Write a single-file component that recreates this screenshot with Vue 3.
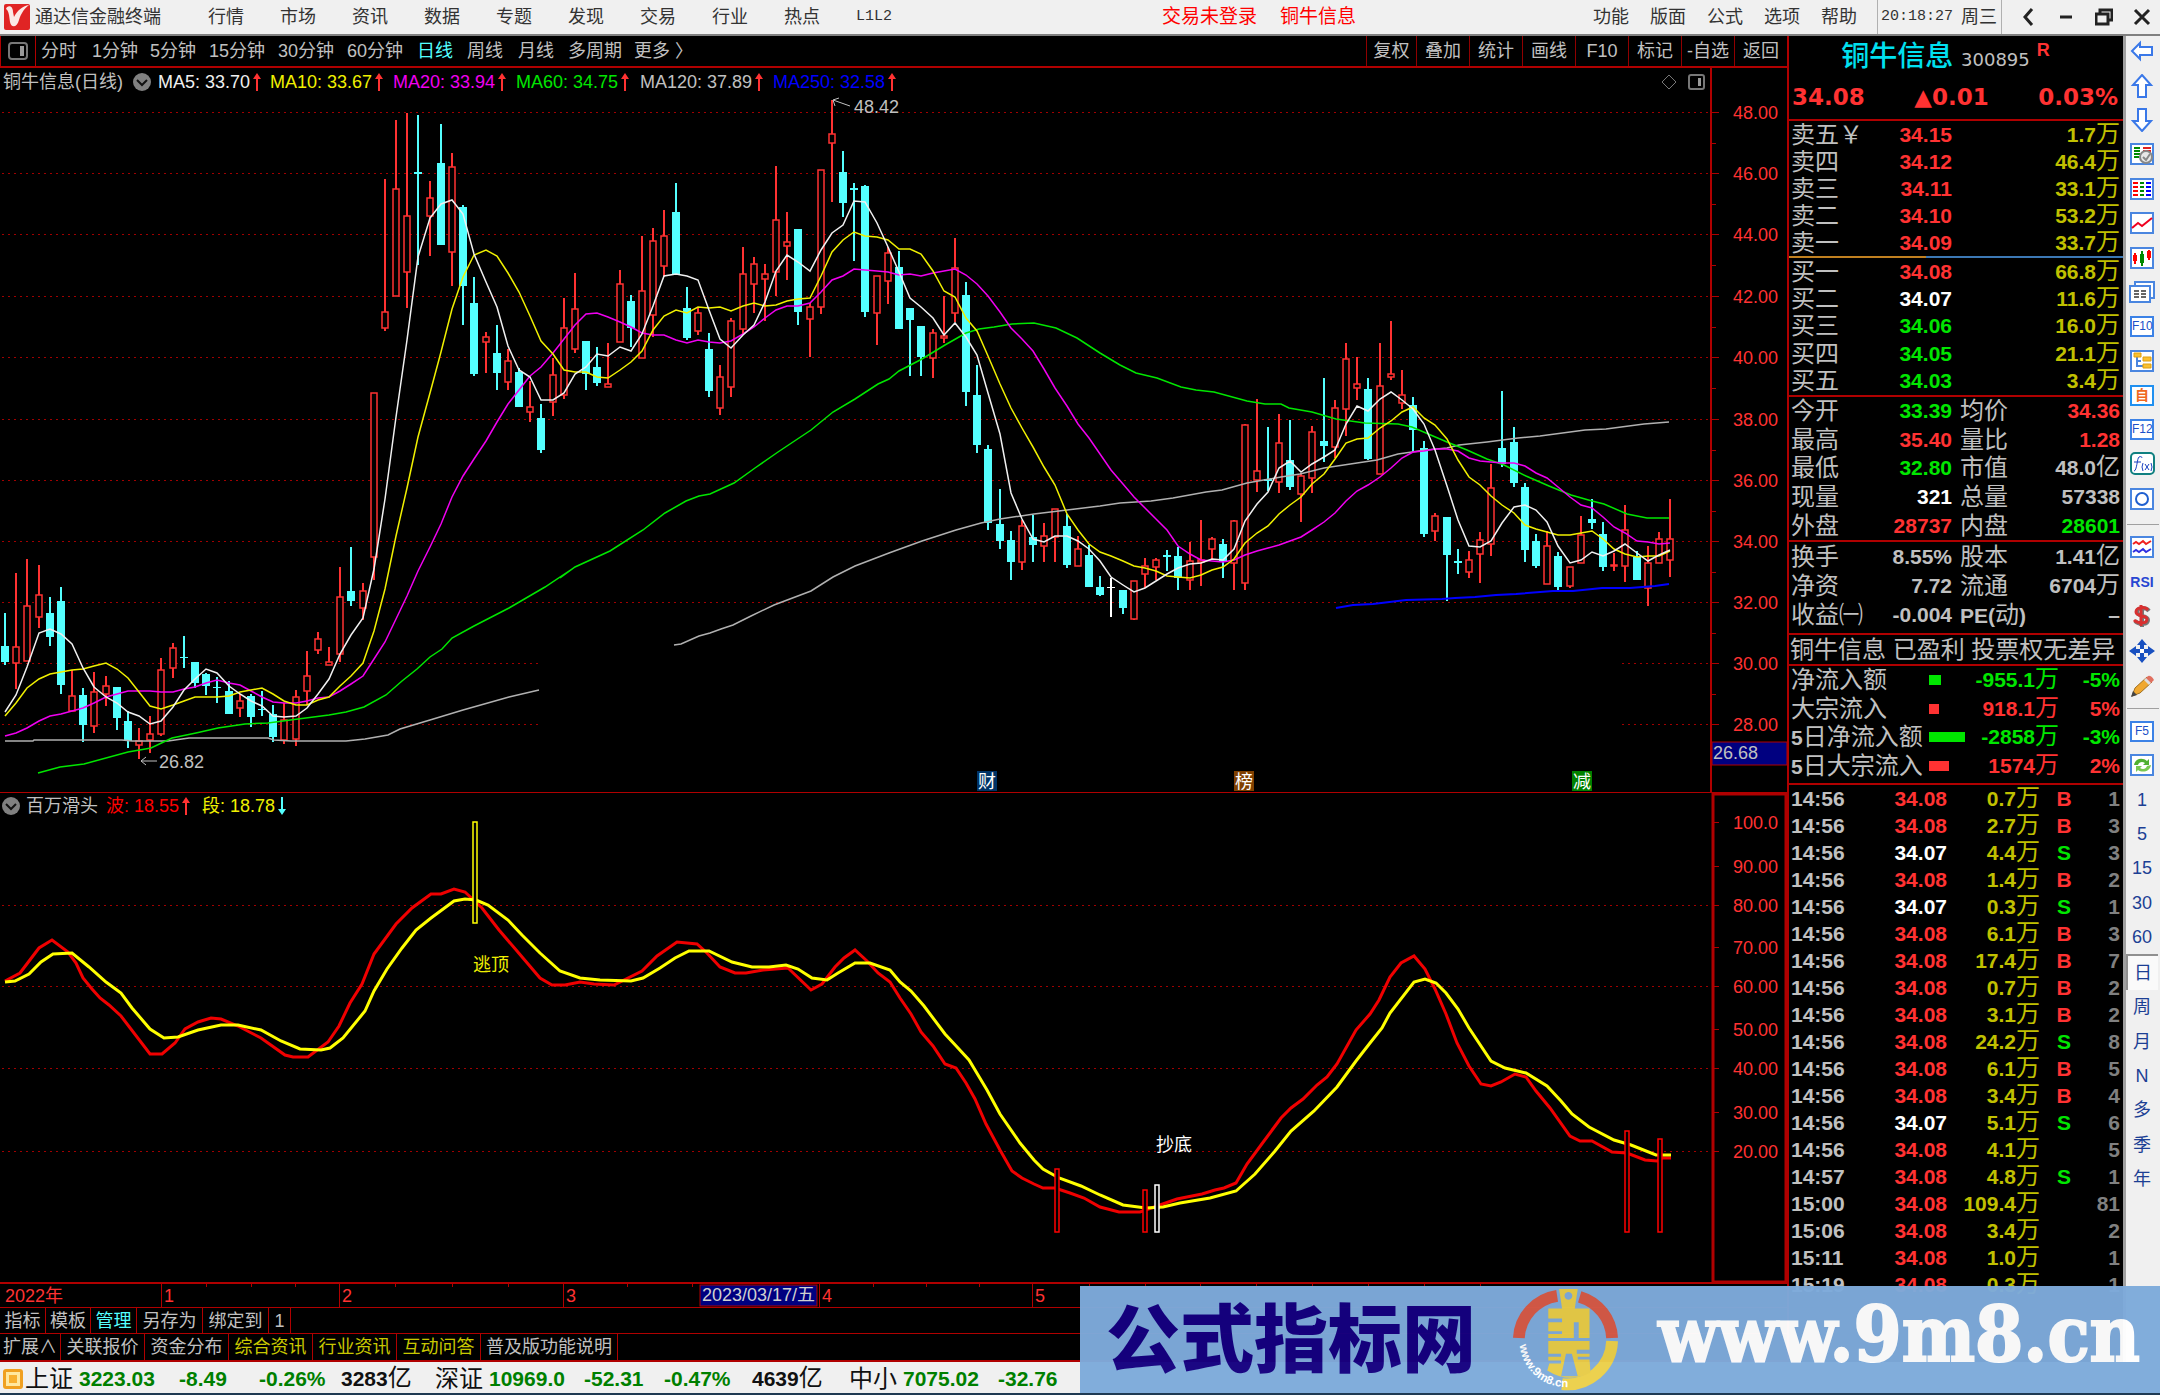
<script setup>
const menus = ['行情', '市场', '资讯', '数据', '专题', '发现', '交易', '行业', '热点', 'L1L2']
const menusRight = ['功能', '版面', '公式', '选项', '帮助']
const periods = ['分时', '1分钟', '5分钟', '15分钟', '30分钟', '60分钟', '日线', '周线', '月线', '多周期', '更多 〉']
const tools = ['复权', '叠加', '统计', '画线', 'F10', '标记', '-自选', '返回']
const averages = [
  ['MA5: 33.70', '#f0f0f0'], ['MA10: 33.67', '#f0f000'], ['MA20: 33.94', '#f000f0'],
  ['MA60: 34.75', '#00e600'], ['MA120: 37.89', '#c0c0c0'], ['MA250: 32.58', '#0000ff']
]

const sells = [['卖五', '34.15', '1.7'], ['卖四', '34.12', '46.4'], ['卖三', '34.11', '33.1'], ['卖二', '34.10', '53.2'], ['卖一', '34.09', '33.7']]
const buys = [['买一', '34.08', '66.8', 'r'], ['买二', '34.07', '11.6', 'w'], ['买三', '34.06', '16.0', 'g'], ['买四', '34.05', '21.1', 'g'], ['买五', '34.03', '3.4', 'g']]
const facts = [
  ['今开', '33.39', 'g', '均价', '34.36', '', 'r'],
  ['最高', '35.40', 'r', '量比', '1.28', '', 'r'],
  ['最低', '32.80', 'g', '市值', '48.0', '亿', 's'],
  ['现量', '321', 'w', '总量', '57338', '', 's'],
  ['外盘', '28737', 'r', '内盘', '28601', '', 'g']
]
const ratios = [
  ['换手', '8.55%', 's', '股本', '1.41', '亿', 's'],
  ['净资', '7.72', 's', '流通', '6704', '万', 's'],
  ['收益㈠', '-0.004', 's', 'PE(动)', '–', '', 's']
]
const flows = [
  ['', '净流入额', 12, '-955.1', '-5%', 'g'],
  ['', '大宗流入', 10, '918.1', '5%', 'r'],
  ['5', '日净流入额', 36, '-2858', '-3%', 'g'],
  ['5', '日大宗流入', 20, '1574', '2%', 'r']
]
const ticks = [
  ['14:56', '34.08', '0.7', 'B', 1], ['14:56', '34.08', '2.7', 'B', 3], ['14:56', '34.07', '4.4', 'S', 3],
  ['14:56', '34.08', '1.4', 'B', 2], ['14:56', '34.07', '0.3', 'S', 1], ['14:56', '34.08', '6.1', 'B', 3],
  ['14:56', '34.08', '17.4', 'B', 7], ['14:56', '34.08', '0.7', 'B', 2], ['14:56', '34.08', '3.1', 'B', 2],
  ['14:56', '34.08', '24.2', 'S', 8], ['14:56', '34.08', '6.1', 'B', 5], ['14:56', '34.08', '3.4', 'B', 4],
  ['14:56', '34.07', '5.1', 'S', 6], ['14:56', '34.08', '4.1', '', 5], ['14:57', '34.08', '4.8', 'S', 1],
  ['15:00', '34.08', '109.4', '', 81], ['15:06', '34.08', '3.4', '', 2], ['15:11', '34.08', '1.0', '', 1],
  ['15:19', '34.08', '0.3', '', 1]
]

/* Candles: kind (r = up, c = down, w = flat), high, body top, body bottom, low */
const early = `c 1170 1244 1280 1286,r 1080 1245 1282 1340,r 1049 1154 1276 1276,r 1062 1128 1178 1203,c 1133 1170 1223 1243,
c 1112 1143 1330 1351,r 1297 1355 1389 1389,c 1338 1352 1420 1458,r 1301 1346 1423 1438,r 1311 1333 1350 1378,
c 1335 1335 1404 1431,c 1388 1412 1456 1472,r 1427 1457 1464 1497,r 1399 1440 1453 1484,r 1269 1298 1441 1444,
r 1237 1248 1293 1314,c 1220 1267 1270 1293,c 1280 1280 1326 1337,c 1304 1307 1333 1353,c 1312 1334 1337 1370,
c 1322 1345 1395 1395,r 1350 1366 1383 1403,c 1350 1355 1403 1425,c 1345 1384 1387 1400,c 1375 1395 1448 1458,
r 1370 1410 1454 1462,r 1342 1358 1451 1467,r 1254 1311 1343 1376,r 1211 1228 1252 1260,r 1245 1278 1285 1285,
r 1066 1134 1262 1279,c 1022 1119 1142 1153,r 1103 1121 1158 1184,r 677 677 1044 1096,r 198 495 530 538,
r 65 220 459 459,r 50 280 405 486,c 54 181 187 390,r 202 240 280 370,c 74 161 346 346,
r 138 170 361 436,c 256 259 437 524,c 417 474 634 638,r 539 550 563 631,c 525 586 631 669,
r 578 604 651 669,c 620 629 708 708,r 650 708 720 742,c 702 732 805 810,r 598 636 697 729,
r 464 530 681 691,r 407 489 577 587,c 561 561 634 669,c 574 618 654 661,r 565 656 664 664,
r 400 432 562 562,c 458 471 530 573,r 324 448 597 597,r 307 337 502 551,r 266 324 391 417,
c 205 272 410 410,c 440 485 553 558,r 483 498 537 546,c 541 578 671 685,r 613 640 710 725,
r 508 516 664 685,r 349 411 533 546,r 371 388 433 497,r 388 409 420 516,r 168 288 405 460,
r 272 338 347 423,c 309 309 496 524,r 475 483 510 595,r 176 177 483 500,r 20 96 116 248,
c 135 182 251 282,c 205 218 221 380,c 211 212 496 507,r 415 415 498 568,r 350 362 425 476,
c 359 395 533 533,c 485 487 513 638,c 527 527 595 638,r 532 542 597 642,r 460 548 553 565,
r 330 397 498 518,c 427 458 674 706,c 613 680 793 812,c 794 801 967 984,c 891 971 1008 1025,
c 985 1006 1054 1095,r 962 975 1056 1072,c 950 998 1017 1055,r 968 996 1020 1055,r 936 936 998 1055,
c 947 975 1061 1068,r 996 1027 1063 1063,c 1017 1039 1111 1111,c 1086 1110 1129 1132,w 1090 1110 1112 1179,
c 1117 1117 1158 1172,r 1097 1098 1182 1186,r 1045 1063 1083 1113,r 1045 1050 1067 1095`
const late = `c 807 822 828 870,c 798 826 890 928,r 783 841 896 928,r 717 838 842 915,r 767 773 805 837,
c 775 790 843 892,r 718 719 847 928,r 430 431 905 928,r 353 571 598 632,c 438 595 599 631,
r 398 485 604 636,c 416 538 618 627,r 575 584 640 722,r 434 454 590 636,c 290 479 496 542,
r 358 382 499 530,r 187 233 383 465,r 228 310 320 356,c 290 325 533 538,r 187 314 580 580,
r 119 278 289 298,r 267 343 365 384,c 348 371 446 513,c 479 502 758 767,r 696 706 751 781,
c 709 709 821 960,c 803 840 846 879,r 809 836 874 892,r 754 778 818 906,r 550 620 788 825,
c 331 502 550 559,c 438 484 605 618,c 605 619 807 843,c 758 781 856 862,r 750 796 909 909,
c 812 826 919 930,r 858 859 914 922,r 704 763 847 847,c 655 713 726 745,c 723 758 857 869,
r 815 853 856 870,r 672 746 855 902,c 809 828 898 898,r 794 847 922 974,r 753 773 847 847,r 655 773 837 888`

const rows = (text, top, scale) => text.split(',').map(row => {
  const [kind, ...ys] = row.trim().split(' ')
  return [kind, ...ys.map(y => Math.round(top + y / scale))]
})
const candles = [...rows(early, 90, 2.24), ...rows(late, 280, 3)].map(([kind, high, top, bottom, low], i) => ({
  kind, high, top, bottom: Math.max(bottom, top + 1), low, x: Math.round(5 + 11.175 * i)
}))
const inks = { r: '#ff3232', c: '#54ffff', w: '#ffffff' }

/* Moving averages run over the closes; the seeds cover the days before the first candle */
const closes = candles.map(c => (c.kind === 'r' ? c.top : c.bottom))
const average = (n, seeds) => closes.map((_, i) => {
  const y = i < n - 1 ? 90 + seeds[i] / 2.24 : closes.slice(i - n + 1, i + 1).reduce((a, b) => a + b) / n
  return `${candles[i].x},${Math.round(y)}`
}).join(' ')
const ma5 = average(5, [1390, 1352, 1290, 1213])
const ma10 = average(10, [1400, 1370, 1337, 1317, 1306, 1302, 1297, 1294, 1287])
const ma20 = average(20, [1444, 1437, 1426, 1411, 1400, 1395, 1389, 1383, 1370, 1358, 1350, 1344, 1343, 1343, 1346, 1346, 1340, 1335, 1326])

const trace = (left, top, sx, sy, text) => text.split(' ').map(p => {
  const [x, y] = p.split(',')
  return `${Math.round(left + x / sx)},${Math.round(top + y / sy)}`
}).join(' ')
const a = t => trace(0, 90, 2.6133, 2.24, t)
const b = t => trace(560, 90, 2.6133, 2.24, t)
const c = t => trace(1120, 280, 2.45, 3, t)
const d = t => trace(0, 780, 1.742, 3, t)
const e = t => trace(840, 880, 1.782, 3, t)

const ma60 = [
  a('100,1527 158,1514 220,1507 335,1481 395,1471 450,1450 512,1437 570,1427 640,1419 700,1416 780,1406 860,1397 905,1390 950,1379 1010,1352 1050,1322 1090,1295 1123,1267 1154,1250 1182,1225 1240,1198 1330,1158 1425,1112 1503,1067'),
  b('0,1090 40,1066 130,1030 216,984 275,945 330,918 362,908 393,902 455,877 510,844 570,808 655,760 714,720 772,689 830,656 860,644 886,628 945,600 1005,568 1060,543 1095,533 1135,528 1180,522 1240,520 1295,531 1350,553 1410,587 1450,606'),
  c('0,252 40,276 90,291 150,317 185,326 230,333 310,359 355,368 395,369 415,381 470,393 530,414 600,427 680,428 715,437 800,484 850,508 900,534 940,552 995,585 1050,615 1105,642 1157,659 1185,670 1242,700 1290,710 1346,710')
].join(' ')
const ma120a = a('13,1457 85,1457 90,1454 320,1454 345,1457 440,1455 495,1450 700,1450 715,1454 760,1457 905,1457 955,1452 1015,1442 1045,1430 1123,1408 1210,1386 1330,1358 1408,1342')
const ma120b = [
  b('298,1241 315,1238 362,1221 393,1215 420,1205 451,1197 500,1175 560,1152 655,1120 714,1089 772,1063 860,1034 945,1009 1035,984 1100,967 1150,959 1240,948 1325,939 1410,930'),
  c('0,665 75,660 130,651 210,632 250,626 310,607 395,589 440,580 500,562 580,545 630,537 680,520 750,507 800,500 830,493 900,483 975,470 1030,466 1140,447 1190,443 1285,428 1346,422')
].join(' ')
const ma250 = c('528,981 570,973 620,970 700,956 790,954 820,950 870,948 920,941 970,939 1060,931 1110,930 1180,922 1250,921 1310,915 1346,908')

const wave = [
  d('8,601 35,577 68,500 90,476 118,513 132,545 145,590 160,625 175,650 190,671 210,705 262,820 283,820 305,785 322,745 345,723 368,711 385,714 415,735 455,770 497,823 510,829 537,829 572,783 590,735 610,667 630,610 652,520 690,430 718,380 750,340 768,338 790,323 810,332 840,380 870,448 900,510 940,590 962,613 985,611 1010,604 1035,609 1070,613 1118,571 1145,525 1180,482 1215,488 1230,512 1255,558 1280,577 1300,576 1330,567 1372,560 1413,628 1432,608 1455,558 1470,532 1490,507 1510,540 1530,577 1550,604 1568,650'),
  e('127,400 145,453 165,495 187,550 207,562 225,605 240,655 260,730 285,808 307,870 325,892 345,908 362,920 383,921 410,937 435,950 463,977 497,992 535,992 565,975 600,953 645,940 668,926 685,922 706,905 725,850 755,780 785,712 803,681 825,655 850,612 868,588 886,550 920,448 945,400 960,357 980,288 1000,247 1022,224 1042,265 1060,325 1080,400 1100,485 1120,555 1143,608 1160,615 1178,604 1202,580 1222,589 1240,630 1265,680 1300,765 1318,780 1340,781 1375,812 1402,816 1435,838 1456,840 1465,830 1480,830')
].join(' ')
const swing = [
  d('8,604 27,601 50,578 72,543 92,520 125,517 155,557 185,603 210,635 230,680 262,745 285,770 310,768 345,748 385,731 415,731 455,748 490,780 523,805 560,808 575,800 597,770 635,690 652,630 675,565 700,500 725,448 750,410 790,360 810,355 830,358 850,371 885,418 910,463 940,515 975,570 1010,590 1045,598 1100,600 1120,590 1150,560 1175,532 1200,510 1235,509 1275,543 1310,559 1340,559 1370,553 1390,563 1415,592 1440,596 1460,577 1490,547 1515,545 1550,568'),
  e('107,302 127,330 150,375 187,460 210,500 230,537 262,628 285,698 320,785 345,838 362,863 390,890 430,915 463,942 505,972 545,980 575,978 605,967 660,950 705,929 740,878 775,810 803,750 845,690 886,618 920,540 945,485 965,440 980,395 1022,302 1042,293 1062,305 1080,335 1102,385 1120,442 1160,540 1185,560 1222,577 1260,616 1285,660 1305,700 1335,738 1380,778 1410,792 1455,822 1480,822')
].join(' ')

const prices = [[48, 111], [46, 172], [44, 233], [42, 295], [40, 356], [38, 418], [36, 479], [34, 540], [32, 601], [30, 662], [28, 723]]
const levels = [['100.0', 821], ['90.00', 865], ['80.00', 904], ['70.00', 946], ['60.00', 985], ['50.00', 1028], ['40.00', 1067], ['30.00', 1111], ['20.00', 1150]]
const signals = [[475, 821, 922, '#ffff00'], [1057, 1168, 1231, '#ff0000'], [1145, 1189, 1231, '#ff0000'], [1157, 1184, 1231, '#ffffff'], [1627, 1130, 1231, '#ff0000'], [1660, 1138, 1231, '#ff0000']]
const tags = [['财', 977, '#003366'], ['榜', 1234, '#804000'], ['减', 1572, '#008000']]
const months = [[161, '1'], [339, '2'], [563, '3'], [819, '4'], [1032, '5']]
const weeks = [206, 251, 295, 395, 452, 508, 627, 692, 873, 926, 979, 1089, 1145, 1200, 1256, 1312, 1368, 1424, 1480]

const tabs = [['指标', 46], ['模板', 45], ['管理', 46, 'cy'], ['另存为', 66], ['绑定到', 66], ['1', 22]]
const links = [['扩展∧', 61], ['关联报价', 84], ['资金分布', 84], ['综合资讯', 84, 'ye'], ['行业资讯', 84, 'ye'], ['互动问答', 84, 'ye'], ['普及版功能说明', 137]]
const indices = [
  ['上证', '3223.03', '-8.49', '-0.26%', '3283亿'],
  ['深证', '10969.0', '-52.31', '-0.47%', '4639亿'],
  ['中小', '7075.02', '-32.76', '', '']
]

const box = '<rect x="2" y="2" width="22" height="20" fill="#fff" stroke="#4a86e0" stroke-width="2"/>'
const blueArrow = 'fill="#fff" stroke="#3a78e8" stroke-width="2"'
const iconsTop = [
  ['后退', `<path d="M3 12 11 4V8H23V16H11V20Z" ${blueArrow}/>`],
  ['上翻', `<path d="M13 1 22 11H17V23H9V11H4Z" ${blueArrow}/>`],
  ['下翻', `<path d="M13 23 22 13H17V1H9V13H4Z" ${blueArrow}/>`],
  ['报价', box + '<path d="M5 6H11M5 9H11M5 12H11M5 15H10" stroke="#008a00" stroke-width="2"/><path d="M14 6H22M14 9H22" stroke="#e02020" stroke-width="2"/><circle cx="17" cy="15" r="6" fill="#e8e8e8" stroke="#888" stroke-width="2"/><path d="M14 15 17 18 21 12" stroke="#888" fill="none" stroke-width="2"/>'],
  ['列表', box + '<path d="M4 6H9M4 10H9M4 14H9M4 18H9" stroke="#f00" stroke-width="2"/><path d="M11 6H15M11 10H15M11 14H15M11 18H15" stroke="#080" stroke-width="2"/><path d="M17 6H22M17 10H22M17 14H22M17 18H22" stroke="#00f" stroke-width="2"/>'],
  ['走势', box + '<path d="M3 17 9 12 13 15 23 7" stroke="#f00020" stroke-width="2" fill="none"/>'],
  ['K线', box + '<path d="M6 7V18M20 4V14" stroke="#f00" stroke-width="2"/><path d="M13 5V20" stroke="#080" stroke-width="2"/><path d="M4 9H8V15H4ZM18 5H22V12H18Z" fill="#f00"/><path d="M11 8H15V17H11Z" fill="#080"/>'],
  ['多窗', '<path d="M6 6V2H25V18H21" fill="#fff" stroke="#4a86e0" stroke-width="2"/><rect x="1" y="6" width="20" height="16" fill="#fff" stroke="#4a86e0" stroke-width="2"/><path d="M5 11H10M12 11H17M5 14H10M12 14H17M5 17H10M12 17H17" stroke="#666" stroke-width="2"/>'],
  ['F10', '', 'F10'],
  ['板块', box + '<path d="M8 7V17H15M8 12H12" stroke="#4a86e0" stroke-width="2" fill="none"/><path d="M5 4H12V8H5ZM14 8H22V12H14ZM14 15H22V19H14Z" fill="#f8c030" stroke="#e0a010"/>'],
  ['自选', '', '自'],
  ['F12', '', 'F12'],
  ['公式', '<rect x="2" y="1" width="23" height="21" rx="4" fill="#fff" stroke="#108080" stroke-width="2"/><path d="M5 19C8 19 8 6 10 5 12 4 13 5 13 6M5 10H12M14 11Q12 15 14 19M22 11Q24 15 22 19M16 12 20 18M20 12 16 18" stroke="#1840c0" fill="none"/>'],
  ['周期', box + '<circle cx="13" cy="12" r="6" fill="none" stroke="#2060d0" stroke-width="2"/>']
]
const iconsMid = [
  ['指标', box + '<path d="M4 9 7 7 10 9 14 6 17 9 22 6" stroke="#f02020" stroke-width="2" fill="none"/><path d="M4 17 7 15 10 17 14 14 17 17 22 14" stroke="#3030e0" stroke-width="2" fill="none"/>'],
  ['RSI', '', 'RSI'],
  ['除权', '<path d="M20 7C17 3 8 3 8 8 8 13 19 11 19 16 19 21 10 21 6 17M13 2V23" stroke="#777" stroke-width="4" fill="none"/><path d="M19 6C16 2 7 3 7 8 7 13 18 11 18 15 18 20 9 20 5 16M12 1V22" stroke="#d83030" stroke-width="3" fill="none"/>'],
  ['移动', '<path d="M13 0 18 6H8ZM13 24 18 18H8ZM0 12 7 7V17ZM26 12 19 7V17Z" fill="#1850c0"/><path d="M13 5V19M6 12H20" stroke="#1850c0" stroke-width="4"/><rect x="11" y="10" width="4" height="4" fill="#fff"/>'],
  ['画笔', '<path d="M3 22 6 14 18 3 23 8 11 19Z" fill="#f0a830" stroke="#a07020"/><path d="M16 5 19 2Q22 1 25 6L21 10Z" fill="#e07060"/><path d="M15 6 20 11 22 9 17 4Z" fill="#ddd"/><path d="M2 23 4 17 8 21Z" fill="#444"/>']
]
const iconsLow = [
  ['F5', '', 'F5'],
  ['刷新', box + '<path d="M5 12C6 5 14 4 18 8L20 6V12H14L16 10C13 8 10 9 9 12Z" fill="#50b030"/><path d="M22 12C21 19 13 20 9 17L7 19V13H13L11 15C14 17 17 16 18 13Z" fill="#78c850"/>']
]
const spans = ['1', '5', '15', '30', '60', '日', '周', '月', 'N', '多', '季', '年']
</script>

<template>
  <div class="app">
    <header class="menubar">
      <svg class="logo" viewBox="0 0 26 26"><rect width="26" height="26" rx="2" fill="#e02424" /><path d="M2 5C3 1 9 1 9 8L10 13C13 7 18 2 25 1 19 6 17 10 15 16 13 24 7 24 6 18L5 11Q4 6 2 5Z" fill="#fbe9e6" /></svg>
      <strong class="brand">通达信金融终端</strong>
      <nav class="menus"><button v-for="m in menus" :key="m" :class="{ mono: m === 'L1L2' }">{{ m }}</button></nav>
      <p class="alert"><a href="#">交易未登录</a><a href="#">铜牛信息</a></p>
      <nav class="menus right"><button v-for="m in menusRight" :key="m">{{ m }}</button></nav>
      <time class="clock"><span class="mono">20:18:27</span> 周三</time>
      <div class="window">
        <button aria-label="收起"><svg viewBox="0 0 16 20"><path d="M12 2 5 10 12 18" /></svg></button>
        <button aria-label="最小化"><svg viewBox="0 0 16 20"><path d="M2 10H14" /></svg></button>
        <button aria-label="还原"><svg viewBox="0 0 18 20"><path d="M5 6V3H17V13H13M1 7H13V17H1Z" /></svg></button>
        <button aria-label="关闭"><svg viewBox="0 0 18 20"><path d="M2 3 16 17M16 3 2 17" /></svg></button>
      </div>
    </header>

    <div class="body">
      <main>
        <div class="bar">
          <button class="toggle" aria-label="侧栏"><svg viewBox="0 0 20 18"><rect x="1" y="1" width="18" height="16" rx="3" fill="none" stroke="#777" stroke-width="2" /><path d="M12 4H16V14H12Z" fill="#999" /></svg></button>
          <nav class="periods"><button v-for="p in periods" :key="p" :class="{ cy: p === '日线' }">{{ p }}</button></nav>
          <nav class="tools"><button v-for="t in tools" :key="t">{{ t }}</button></nav>
        </div>

        <section class="pane">
          <div class="legend">
            <span class="name">铜牛信息(日线)</span>
            <svg class="knob" viewBox="0 0 20 20"><circle cx="10" cy="10" r="9" fill="#808080" /><path d="M5 8 10 13 15 8" fill="none" stroke="#111" stroke-width="2" /></svg>
            <ul class="averages">
              <li v-for="[t, ink] in averages" :key="t" :style="{ color: ink }">{{ t }}<svg class="arrow" viewBox="0 0 8 20"><path d="M4 1 8 7H5V19H3V7H0Z" fill="#ff3232" /></svg></li>
            </ul>
            <svg class="corner" viewBox="0 0 50 20"><path d="M9 3 16 10 9 17 2 10Z" fill="none" stroke="#777" /><rect x="29" y="3" width="15" height="14" rx="2" fill="none" stroke="#777" stroke-width="2" /><path d="M38 6H41V14H38Z" fill="#999" /></svg>
          </div>
          <svg class="plot" viewBox="0 67 1787 725" role="img" aria-label="日线K线图">
            <g stroke="#a00000" stroke-dasharray="2 4">
              <path v-for="[p, y] in prices" :key="p" :d="p > 30 ? `M2 ${y + 0.5}H1710` : `M2 ${y + 0.5}H538M1622 ${y + 0.5}H1710`" />
            </g>
            <g v-for="k in candles" :key="k.x" :fill="inks[k.kind]">
              <rect :x="k.x - 1" :y="k.high" width="2" :height="Math.max(k.top - k.high, 0)" />
              <rect :x="k.x - 1" :y="k.bottom" width="2" :height="Math.max(k.low - k.bottom, 0)" />
              <rect v-if="k.kind === 'r'" :x="k.x - 3" :y="k.top" width="6" :height="k.bottom - k.top" fill="#000" :stroke="inks.r" stroke-width="1.5" />
              <rect v-else :x="k.x - 4" :y="k.top" width="8" :height="k.bottom - k.top" />
            </g>
            <g fill="none" stroke-width="1.5">
              <polyline :points="ma250" stroke="#0000ff" stroke-width="2" />
              <polyline :points="ma120a" stroke="#b0b0b0" />
              <polyline :points="ma120b" stroke="#b0b0b0" />
              <polyline :points="ma60" stroke="#00e600" />
              <polyline :points="ma20" stroke="#f000f0" />
              <polyline :points="ma10" stroke="#f0f000" />
              <polyline :points="ma5" stroke="#f0f0f0" />
            </g>
            <path d="M141 760H157M146 756 141 760 146 764M850 105 833 99M839 97 833 99 835 105" fill="none" stroke="#c0c0c0" />
            <g class="t" fill="#c0c0c0"><text x="159" y="767">26.82</text><text x="854" y="112">48.42</text></g>
            <g v-for="[t, x, bg] in tags" :key="t"><rect :x="x" y="770" width="20" height="20" :fill="bg" /><text class="t" :x="x + 1" y="787" fill="#fff">{{ t }}</text></g>
            <path d="M1711 67V792" stroke="#b00000" stroke-width="2" />
            <g v-for="[p, y] in prices" :key="p" stroke="#b00000">
              <path :d="`M1712 ${y + 0.5}H1719M1712 ${y + 31.5}H1716`" />
            </g>
            <g class="t" fill="#ff3232" text-anchor="end"><text v-for="[p, y] in prices" :key="p" x="1778" :y="y + 7">{{ p }}.00</text></g>
            <rect x="1712" y="741" width="75" height="23" fill="#000080" stroke="#b00000" />
            <text class="t" x="1713" y="758" fill="#c0c0c0">26.68</text>
            <path d="M0 791.5H1787" stroke="#b00000" />
          </svg>
        </section>

        <section class="pane">
          <div class="legend second">
            <svg class="knob" viewBox="0 0 20 20"><circle cx="10" cy="10" r="9" fill="#808080" /><path d="M5 8 10 13 15 8" fill="none" stroke="#111" stroke-width="2" /></svg>
            <span class="name">百万滑头</span>
            <span class="wave">波: 18.55<svg class="arrow" viewBox="0 0 8 20"><path d="M4 1 8 7H5V19H3V7H0Z" fill="#ff3232" /></svg></span>
            <span class="swing">段: 18.78<svg class="arrow" viewBox="0 0 8 20"><path d="M4 19 8 13H5V1H3V13H0Z" fill="#54ffff" /></svg></span>
          </div>
          <svg class="plot" viewBox="0 792 1787 514" role="img" aria-label="百万滑头指标图">
            <g stroke="#a00000" stroke-dasharray="2 4"><path d="M2 904.5H1710M2 985.5H1710M2 1067.5H1710M2 1150.5H1710" /></g>
            <polyline :points="wave" fill="none" stroke="#f00000" stroke-width="3" />
            <polyline :points="swing" fill="none" stroke="#ffff00" stroke-width="3" />
            <rect v-for="[x, y1, y2, ink] in signals" :key="x" :x="x - 2" :y="y1" width="4" :height="y2 - y1" fill="#000" :stroke="ink" stroke-width="1.5" />
            <g class="t"><text x="473" y="970" fill="#f0f000">逃顶</text><text x="1156" y="1150" fill="#fff">抄底</text></g>
            <rect x="1713" y="793" width="73" height="488" fill="none" stroke="#b00000" stroke-width="3" />
            <path v-for="[t, y] in levels" :key="t" :d="`M1713 ${y + 0.5}H1719`" stroke="#b00000" />
            <g class="t" fill="#ff3232" text-anchor="end"><text v-for="[t, y] in levels" :key="t" x="1778" :y="y + 7">{{ t }}</text></g>
            <path d="M0 1282H1787" stroke="#b00000" stroke-width="2" />
            <path v-for="x in weeks" :key="x" :d="`M${x + 0.5} 1283V1286`" stroke="#b00000" />
            <g v-for="[x, t] in months" :key="t"><path :d="`M${x + 0.5} 1283V1306`" stroke="#b00000" /><text class="t" :x="x + 3" y="1301" fill="#ff3232">{{ t }}</text></g>
            <text class="t" x="5" y="1301" fill="#ff3232">2022年</text>
            <rect x="700" y="1284" width="117" height="21" fill="#000080" stroke="#b00000" />
            <text class="t" x="702" y="1300" fill="#d0d0d0">2023/03/17/五</text>
          </svg>
        </section>

        <nav class="strip"><button v-for="[t, w, k] in tabs" :key="t" :class="k" :style="{ width: w + 'px' }">{{ t }}</button></nav>
        <nav class="strip last"><button v-for="[t, w, k] in links" :key="t" :class="k" :style="{ width: w + 'px' }">{{ t }}</button></nav>
      </main>

      <aside class="quote">
        <div class="head">
          <h1>铜牛信息 <small>300895</small><sup>R</sup></h1>
          <p class="last-price"><b>34.08</b><b>▲0.01</b><b>0.03%</b></p>
        </div>
        <table class="levels">
          <tbody><tr v-for="[n, p, v] in sells" :key="n"><th>{{ n }}<i v-if="n === '卖五'">￥</i></th><td class="r">{{ p }}</td><td class="y">{{ v }}<i>万</i></td></tr></tbody>
        </table>
        <div class="ratio"></div>
        <table class="levels ruled">
          <tbody><tr v-for="[n, p, v, k] in buys" :key="n"><th>{{ n }}</th><td :class="k">{{ p }}</td><td class="y">{{ v }}<i>万</i></td></tr></tbody>
        </table>
        <div class="rule"></div>
        <table class="facts">
          <tbody><tr v-for="f in facts" :key="f[0]"><th>{{ f[0] }}</th><td :class="f[2]">{{ f[1] }}</td><th>{{ f[3] }}</th><td :class="f[6]">{{ f[4] }}<i>{{ f[5] }}</i></td></tr></tbody>
        </table>
        <div class="rule"></div>
        <table class="facts short">
          <tbody><tr v-for="f in ratios" :key="f[0]"><th>{{ f[0] }}</th><td :class="f[2]">{{ f[1] }}</td><th v-if="f[3] === 'PE(动)'"><b>PE(</b>动<b>)</b></th><th v-else>{{ f[3] }}</th><td :class="f[6]">{{ f[4] }}<i>{{ f[5] }}</i></td></tr></tbody>
        </table>
        <div class="rule"></div>
        <p class="news">铜牛信息 已盈利 投票权无差异</p>
        <div class="rule"></div>
        <table class="flows">
          <tbody><tr v-for="[n, t, w, v, p, k] in flows" :key="t"><th><b>{{ n }}</b>{{ t }}</th><td :class="k"><span class="gauge" :style="{ width: w + 'px' }"></span></td><td :class="k">{{ v }}<i>万</i></td><td :class="k">{{ p }}</td></tr></tbody>
        </table>
        <div class="rule"></div>
        <table class="ticks">
          <tbody><tr v-for="([t, p, v, s, n], i) in ticks" :key="i"><td class="s">{{ t }}</td><td :class="p === '34.07' ? 'w' : 'r'">{{ p }}</td><td class="y">{{ v }}<i>万</i></td><td :class="s === 'S' ? 'g' : 'r'">{{ s }}</td><td class="dim">{{ n }}</td></tr></tbody>
        </table>
      </aside>

      <nav class="rail">
        <div class="group first"><button v-for="[n, art, t] in iconsTop" :key="n" :aria-label="n"><span v-if="t" class="chip" :class="{ own: t === '自' }">{{ t }}</span><svg v-else viewBox="0 0 26 24" v-html="art"></svg></button></div>
        <hr class="wide">
        <div class="group mid"><button v-for="[n, art, t] in iconsMid" :key="n" :aria-label="n"><b v-if="t" class="rsi">{{ t }}</b><svg v-else viewBox="0 0 26 24" v-html="art"></svg></button></div>
        <hr>
        <div class="group low">
          <button v-for="[n, art, t] in iconsLow" :key="n" :aria-label="n"><span v-if="t" class="chip">{{ t }}</span><svg v-else viewBox="0 0 26 24" v-html="art"></svg></button>
          <button v-for="s in spans" :key="s" :class="{ on: s === '日' }">{{ s }}</button>
        </div>
      </nav>
    </div>

    <footer class="status">
      <svg class="coin" viewBox="0 0 22 22"><rect x="1" y="1" width="20" height="20" rx="3" fill="#f0a020" /><rect x="4" y="4" width="14" height="14" fill="#ffe8a0" /><rect x="7" y="7" width="8" height="8" fill="#f8b030" /></svg>
      <p v-for="[n, v, d1, d2, m] in indices" :key="n"><span>{{ n }}</span><b>{{ v }}</b><b>{{ d1 }}</b><b>{{ d2 }}</b><b class="money">{{ m.slice(0, -1) }}<i>{{ m.slice(-1) }}</i></b></p>
    </footer>

    <div class="banner">
      <strong class="site">公式指标网</strong>
      <svg class="emblem" viewBox="0 0 110 109">
        <path d="M9 53A46 46 0 0 1 48 10" fill="none" stroke="#d65a48" stroke-width="12" />
        <path d="M71 11A46 46 0 0 1 104 53" fill="none" stroke="#d65a48" stroke-width="12" />
        <path d="M104 56A46 46 0 0 1 53 100" fill="none" stroke="#ecd04a" stroke-width="12" />
        <path fill-rule="evenodd" fill="#e8cc48" d="M50 3H69L67 16 66 23H81V53H70V37H65V53H39V49H53V46H39V37H53V33H39V23H53L52 16ZM59 6A4 4 0 1 0 60 6ZM39 56H81V65H68V69H81V72H69V75H81L82 88Q60 100 38 86L40 79H52V76H39V72H52V69H39ZM57 69 52 92H69L63 69Z" />
        <path id="ring" d="M10 60A47 47 0 0 0 57 103" fill="none" /><text class="ring"><textPath href="#ring">www.9m8.cn</textPath></text>
      </svg>
      <strong class="url">www.9m8.cn</strong>
    </div>
  </div>
</template>

<style>
body { margin: 0; background: #000; }
</style>

<style scoped>
* { box-sizing: border-box; }
.app { position: relative; font: 18px/24px "Liberation Sans", "Noto Sans CJK SC", sans-serif; color: #c0c0c0; background: #000; border-bottom: 2px solid #1f3a52; white-space: nowrap; overflow: hidden; }
button { font: inherit; color: inherit; background: none; border: 0; padding: 0; margin: 0; text-align: center; }
p, ul, h1 { margin: 0; padding: 0; }
i { font-style: normal; }
a { color: inherit; text-decoration: none; }
.mono { font-family: "Liberation Mono", monospace; font-size: 15px; }
.cy { color: #54ffff; }
.ye { color: #c8c800; }

.menubar { display: flex; align-items: center; height: 36px; padding-left: 4px; color: #333; background: #f0f0f0; border-bottom: 2px solid #808080; }
.logo { width: 26px; height: 26px; }
.brand { margin-left: 5px; font-weight: 400; }
.menus { display: flex; gap: 36px; margin-left: 47px; }
.alert { display: flex; gap: 23px; margin-left: auto; color: #f00; font-size: 19px; }
.menus.right { gap: 21px; margin-left: 237px; }
.clock { display: flex; align-items: center; gap: 8px; width: 125px; height: 34px; margin-left: 20px; padding-left: 3px; border: solid #b0b0b0; border-width: 0 1px; }
.window { display: flex; gap: 20px; padding: 0 9px 0 17px; }
.window svg { display: block; width: 18px; height: 20px; fill: none; stroke: #222; stroke-width: 3; }

.body { display: grid; grid-template-columns: minmax(0, 1fr) 336px 37px; }
.bar { display: flex; height: 32px; border-bottom: 2px solid #b00000; }
.toggle { width: 36px; border-right: 1px solid #b00000; border-left: 1px solid #b00000; }
.toggle svg { display: block; width: 20px; height: 18px; margin: auto; }
.periods { display: grid; grid-template-columns: 51px 58px 59px 69px 69px 70px 50px 51px 50px 66px auto; padding-left: 5px; }
.periods button { text-align: left; }
.tools { display: grid; grid-template-columns: 50px repeat(6, 53px) 53px; margin-left: auto; }
.tools button { border-left: 1px solid #900000; }

.pane { position: relative; }
.plot { display: block; width: 100%; height: auto; }
.t { font-size: 18px; }
.legend { position: absolute; top: 0; left: 0; right: 77px; display: flex; align-items: center; height: 27px; padding-left: 3px; }
.legend .name { width: 129px; }
.knob { width: 20px; height: 20px; }
.averages { display: grid; grid-template-columns: 112px 123px 123px 124px 133px auto; margin-left: 6px; list-style: none; }
.arrow { width: 8px; height: 20px; margin-left: 3px; vertical-align: -4px; }
.corner { width: 50px; height: 20px; margin-left: auto; }
.legend.second { gap: 5px; padding: 0 0 0 1px; height: 25px; }
.legend.second .name { width: 75px; }
.wave { color: #f00; width: 91px; }
.swing { color: #f0f000; }

.strip { display: flex; height: 26px; border-top: 1px solid #b00000; line-height: 24px; }
.strip.last { height: 29px; border-bottom: 2px solid #b00000; }
.strip button { border-right: 1px solid #b00000; }

.quote { border-left: 2px solid #b00000; overflow: hidden; }
.head { height: 85px; border-bottom: 2px solid #b00000; }
h1 { height: 42px; padding-right: 21px; text-align: center; color: #00e0f0; font-size: 28px; line-height: 42px; font-weight: 500; }
h1 small { font: 18px "DejaVu Sans", sans-serif; color: #c0c0c0; }
h1 sup { margin-left: 7px; color: #ff3232; font-size: 18px; font-weight: 700; line-height: 0; }
.last-price { display: flex; justify-content: space-between; padding: 0 5px 0 3px; color: #ff3232; font: 700 23px/38px "DejaVu Sans", sans-serif; }
table { width: 331px; border-collapse: collapse; table-layout: fixed; font-size: 21px; font-weight: 700; line-height: 26px; }
th { padding: 0 0 0 2px; text-align: left; font-size: 24px; font-weight: 400; }
td { padding: 0; text-align: right; }
td i, th i, th b { font-weight: 400; font-size: 24px; line-height: 0; }
th b { font-size: 21px; font-weight: 700; }
.r { color: #ff3232; } .g { color: #00e600; } .w { color: #fff; } .y { color: #c0c000; } .s { color: #c0c0c0; } .dim { color: #808080; }
.rule { height: 2px; background: #b00000; }
.levels { height: 135px; }
.levels.ruled { height: 137px; }
.levels th { width: 90px; }
.levels td:nth-child(2) { width: 73px; }
.ratio { height: 2px; background: linear-gradient(90deg, #c08020 137px, #3c78b4 137px); }
.facts { height: 143px; }
.facts.short { height: 87px; margin-bottom: 4px; }
.facts th { width: 84px; }
.facts td:nth-child(2) { width: 79px; }
.facts th:nth-child(3) { width: 84px; padding-left: 8px; }
.news { height: 29px; padding-left: 1px; font-size: 24px; line-height: 29px; }
.flows { height: 114px; margin-bottom: 3px; }
.flows th { width: 140px; }
.flows td:nth-child(2) { width: 38px; text-align: left; }
.flows td:nth-child(3) { width: 92px; }
.gauge { display: block; height: 10px; background: currentColor; }
.ticks td { height: 27px; }
.ticks td:first-child { width: 84px; padding-left: 2px; text-align: left; }
.ticks td:nth-child(2) { width: 74px; }
.ticks td:nth-child(3) { width: 93px; }
.ticks td:nth-child(4) { width: 48px; text-align: center; }

.rail { background: #f0f0f0; border-left: 3px solid #a0a0a0; color: #1c3f94; }
.group { display: flex; flex-direction: column; }
.group button { display: flex; flex: 1; align-items: center; justify-content: center; width: 32px; }
.group svg { display: block; width: 26px; height: 24px; }
.first { height: 482px; margin-top: -2px; }
.mid { height: 173px; }
.low { height: 482px; }
hr { height: 1px; margin: 5px 1px; border: 0; background: #a0a0a0; }
hr.wide { margin: 8px 1px 5px; }
.chip { width: 24px; height: 21px; border: 2px solid #3c82e6; background: #fff; color: #1c50c8; font-size: 12px; line-height: 17px; }
.chip.own { color: #f06820; font-weight: 700; font-size: 14px; border-color: #2090f0; }
.rsi { color: #2846d2; font-size: 14px; }
.group .on { background: #fafafa; border: solid #909090; border-width: 2px 0 0 2px; }

.status { display: flex; align-items: center; height: 31px; padding: 2px 0 0 2px; background: #f0f0f0; color: #111; font-size: 24px; overflow: hidden; }
.coin { width: 22px; height: 22px; flex: none; margin-right: 1px; }
.status p { display: grid; grid-template-columns: 54px 100px 80px 82px 94px; flex: none; }
.status p b { font-size: 21px; color: #008000; }
.status p + p { grid-template-columns: 54px 95px 80px 88px 97px; }
.status .money { color: #111; }
.status i { font-weight: 400; font-size: 24px; line-height: 0; }

.banner { position: absolute; right: 0; bottom: 0; display: flex; align-items: center; width: 50%; height: 107px; padding: 0 20px 0 26px; background: #7eabdb; opacity: .97; }
.site { margin-bottom: 12px; color: #150080; font: 900 74px/90px "Noto Sans CJK SC", sans-serif; }
.emblem { width: 110px; height: 107px; margin-left: 33px; }
.ring { font: 700 12px "Liberation Sans", sans-serif; fill: #fff; }
.url { margin: 0 0 12px auto; color: #fff; font: 700 77px/90px "DejaVu Serif Condensed", "DejaVu Serif", serif; -webkit-text-stroke: 2px #fff; }
</style>
